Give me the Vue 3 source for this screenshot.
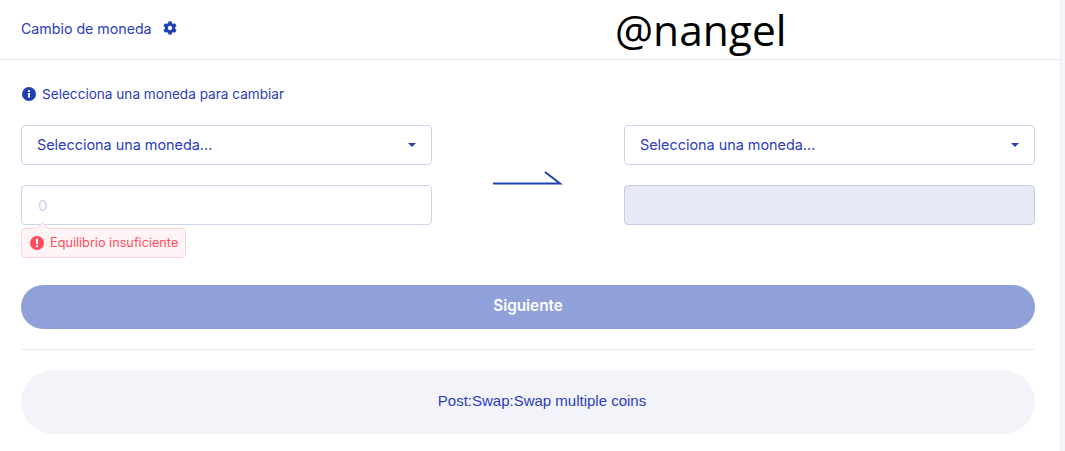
<script setup>
const selectLabel = "Selecciona una moneda...";
</script>

<template>
  <div class="page">
    <main class="swap">
      <header class="swap__header">
        <div class="swap__title">
          <span>Cambio de moneda</span>
          <svg class="swap__gear" viewBox="0 0 512 512" aria-hidden="true">
            <path d="M487.4 315.7l-42.6-24.6c4.3-23.2 4.3-47 0-70.2l42.6-24.6c4.9-2.8 7.1-8.6 5.5-14-11.1-35.6-30-67.8-54.7-94.6-3.8-4.1-10-5.1-14.8-2.3L380.8 110c-17.9-15.4-38.5-27.3-60.8-35.1V25.8c0-5.6-3.9-10.5-9.4-11.7-36.7-8.2-74.3-7.8-109.2 0-5.5 1.2-9.4 6.1-9.4 11.7V75c-22.2 7.9-42.8 19.8-60.8 35.1L88.7 85.5c-4.9-2.8-11-1.9-14.8 2.3-24.7 26.7-43.6 58.9-54.7 94.6-1.7 5.4.6 11.2 5.5 14L67.3 221c-4.3 23.2-4.3 47 0 70.2l-42.6 24.6c-4.9 2.8-7.1 8.6-5.5 14 11.1 35.6 30 67.8 54.7 94.6 3.8 4.1 10 5.1 14.8 2.3l42.6-24.6c17.9 15.4 38.5 27.3 60.8 35.1v49.2c0 5.6 3.9 10.5 9.4 11.7 36.7 8.2 74.3 7.8 109.2 0 5.5-1.2 9.4-6.1 9.4-11.7v-49.2c22.2-7.9 42.8-19.8 60.8-35.1l42.6 24.6c4.9 2.8 11 1.9 14.8-2.3 24.7-26.7 43.6-58.9 54.7-94.6 1.5-5.5-.7-11.3-5.6-14.1zM256 336c-44.1 0-80-35.9-80-80s35.9-80 80-80 80 35.9 80 80-35.9 80-80 80z" />
          </svg>
        </div>
        <div class="swap__watermark">@nangel</div>
      </header>

      <section class="swap__body">
        <p class="swap__hint">
          <svg class="swap__info" viewBox="0 0 14 14" aria-hidden="true">
            <circle cx="7" cy="7" r="7" />
            <rect x="6" y="6" width="2" height="4.6" fill="#fff" />
            <rect x="6" y="3.2" width="2" height="1.8" fill="#fff" />
          </svg>
          Selecciona una moneda para cambiar
        </p>

        <div class="swap__grid">
          <div class="swap__col">
            <div class="field field--select">
              <span>{{ selectLabel }}</span>
              <i class="field__caret"></i>
            </div>
            <div class="field field--input">
              <span class="field__placeholder">0</span>
              <div class="tip">
                <svg class="tip__icon" viewBox="0 0 14 14" aria-hidden="true">
                  <circle cx="7" cy="7" r="7" />
                  <rect x="6" y="2.8" width="2" height="5.2" fill="#fff" />
                  <rect x="6" y="9.2" width="2" height="2" fill="#fff" />
                </svg>
                Equilibrio insuficiente
              </div>
            </div>
          </div>

          <div class="swap__arrow">
            <svg width="72" height="16" viewBox="0 0 72 16" aria-hidden="true">
              <path d="M0 13.5H67L52 2" fill="none" stroke="#2041b2" stroke-width="2" />
            </svg>
          </div>

          <div class="swap__col">
            <div class="field field--select">
              <span>{{ selectLabel }}</span>
              <i class="field__caret"></i>
            </div>
            <div class="field field--disabled"></div>
          </div>
        </div>

        <button class="swap__next" type="button">Siguiente</button>
        <hr class="swap__rule" />
        <div class="swap__note">Post:Swap:Swap multiple coins</div>
      </section>
    </main>
    <aside class="strip"></aside>
  </div>
</template>

<style>
html,
body {
  margin: 0;
  background: #fff;
}
</style>

<style scoped>
.page {
  display: flex;
  width: 1065px;
  height: 451px;
  overflow: hidden;
  font-family: Inter, "Liberation Sans", sans-serif;
  color: #2a3cbc;
}

.swap {
  width: 1060px;
  flex: none;
}

.strip {
  flex: 1;
  background: #f4f5fb;
  border-left: 1px solid #e9ebf6;
}

.swap__header {
  display: flex;
  align-items: center;
  height: 59px;
  padding-left: 21px;
  border-bottom: 1px solid #e8e9f2;
}

.swap__title {
  display: flex;
  align-items: center;
  gap: 11px;
  width: 594px;
  margin-top: -3px;
  font-size: 14.2px;
}

.swap__gear {
  width: 14px;
  height: 14px;
  fill: #2041b2;
}

.swap__watermark {
  margin-top: -1px;
  font-family: "Open Sans", sans-serif;
  font-size: 42.5px;
  line-height: 59px;
  color: #000;
}

.swap__body {
  padding: 26px 25px 0 21px;
}

.swap__hint {
  display: flex;
  align-items: center;
  gap: 6px;
  height: 16px;
  margin: 0 0 23px 1px;
  font-size: 13.6px;
}

.swap__info {
  width: 14px;
  height: 14px;
  fill: #2041b2;
}

.swap__grid {
  display: grid;
  grid-template-columns: 411px 1fr 411px;
  height: 160px;
}

.swap__col {
  display: flex;
  flex-direction: column;
  gap: 20px;
}

.swap__arrow {
  display: flex;
  justify-content: center;
  padding-top: 45px;
  padding-left: 2px;
}

.field {
  position: relative;
  display: flex;
  align-items: center;
  box-sizing: border-box;
  height: 40px;
  padding: 0 16px;
  border: 1px solid #cdd5ea;
  border-radius: 4px;
  font-size: 14px;
  background: #fff;
}

.field--select {
  padding: 0 15px 2px;
  font-size: 14.4px;
}

.field__caret {
  width: 0;
  height: 0;
  margin-left: auto;
  border-left: 4.5px solid transparent;
  border-right: 4.5px solid transparent;
  border-top: 4.5px solid #2a3cbc;
  transform: translateY(1px);
}

.field__placeholder {
  color: #cdd3ee;
  font-size: 15px;
}

.field--disabled {
  background: #e6eaf5;
  border-color: #c3cde6;
}

.tip {
  position: absolute;
  top: 42px;
  left: -1px;
  display: flex;
  align-items: center;
  gap: 6px;
  height: 30px;
  padding: 0 7px 1px 8px;
  box-sizing: border-box;
  border: 1px solid #ffd3d7;
  border-radius: 4px;
  background: #fff5f6;
  color: #ff4d5e;
  font-size: 12.7px;
  white-space: nowrap;
}

.tip::before {
  content: "";
  position: absolute;
  top: -5px;
  left: 16px;
  width: 8px;
  height: 8px;
  background: #fff5f6;
  border-top: 1px solid #ffd3d7;
  border-left: 1px solid #ffd3d7;
  transform: rotate(45deg);
}

.tip__icon {
  width: 14px;
  height: 14px;
  fill: #ff4d5e;
}

.swap__next {
  display: block;
  width: 100%;
  height: 44px;
  padding: 0 0 3px;
  border: 0;
  border-radius: 22px;
  background: #90a1da;
  color: #fff;
  font-family: inherit;
  font-size: 15.3px;
  font-weight: 600;
}

.swap__rule {
  margin: 20px 0;
  border: 0;
  border-top: 1px solid #e8e9f2;
}

.swap__note {
  display: flex;
  align-items: center;
  justify-content: center;
  height: 64px;
  padding: 0 0 3px 28px;
  box-sizing: border-box;
  border-radius: 32px;
  background: #f3f4fa;
  font-family: "Liberation Sans", sans-serif;
  font-size: 15px;
}
</style>
